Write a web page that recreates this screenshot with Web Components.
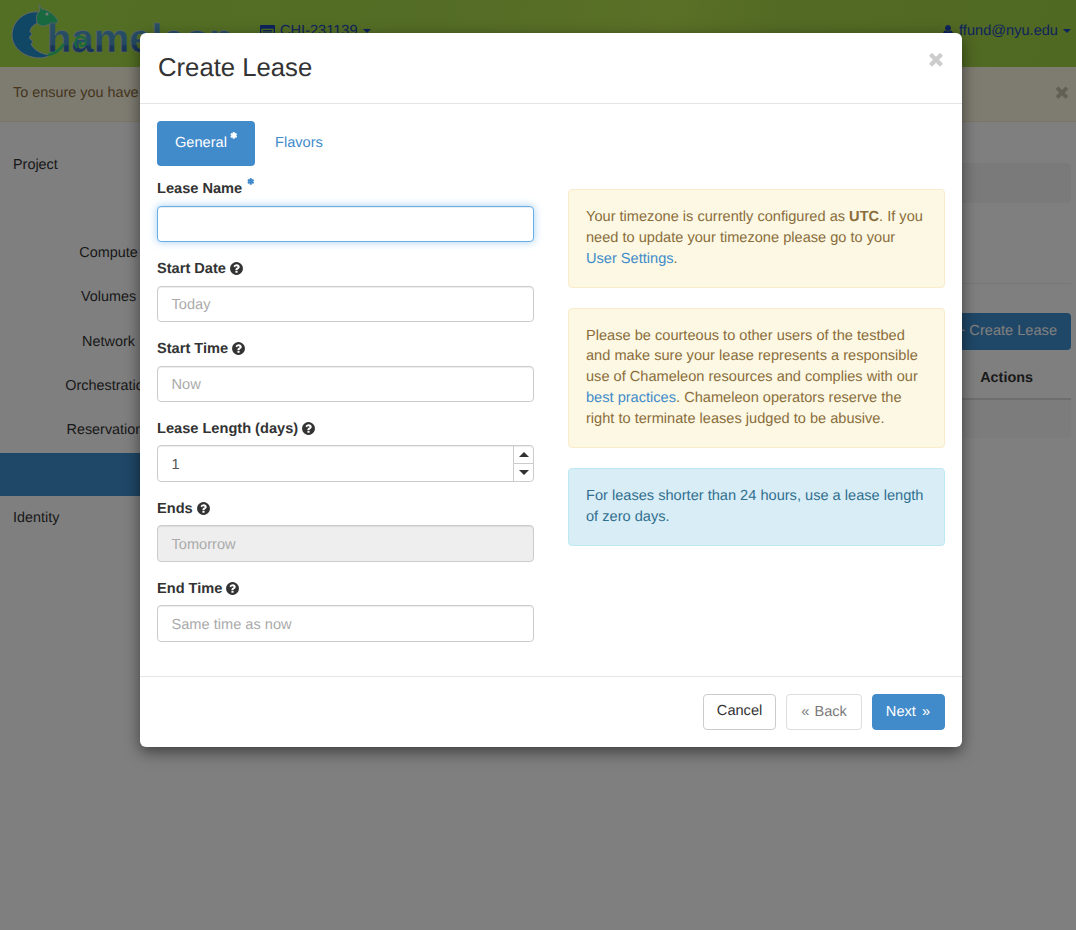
<!DOCTYPE html>
<html lang="en">
<head>
<meta charset="utf-8">
<title>Create Lease</title>
<style>
  html, body { margin: 0; height: 100%; }
  body { font: 14.400px/20.570px "Liberation Sans", Arial, sans-serif; color: #333; background: #fff; overflow: hidden; text-rendering: geometricPrecision; }
</style>
</head>
<body>

<cc-backdrop-page></cc-backdrop-page>

<cc-modal heading="Create Lease">
  <cc-tabs slot="tabs"></cc-tabs>
  <div slot="left">
    <cc-field label="Lease Name" required focused></cc-field>
    <cc-field label="Start Date" help placeholder="Today"></cc-field>
    <cc-field label="Start Time" help placeholder="Now"></cc-field>
    <cc-field label="Lease Length (days)" help value="1" spinner tall></cc-field>
    <cc-field label="Ends" help placeholder="Tomorrow" disabled tall></cc-field>
    <cc-field label="End Time" help placeholder="Same time as now" tall></cc-field>
  </div>
  <div slot="right">
    <cc-alert>Your timezone is currently configured as <b>UTC</b>. If you need to update your timezone please go to your <a>User Settings</a>.</cc-alert>
    <cc-alert>Please be courteous to other users of the testbed and make sure your lease represents a responsible use of Chameleon resources and complies with our <a>best practices</a>. Chameleon operators reserve the right to terminate leases judged to be abusive.</cc-alert>
    <cc-alert kind="info">For leases shorter than 24 hours, use a lease length of zero days.</cc-alert>
  </div>
  <cc-btn slot="footer" raised>Cancel</cc-btn>
  <cc-btn slot="footer" disabled><span>«</span><span>Back</span></cc-btn>
  <cc-btn slot="footer" primary><span>Next</span><span>»</span></cc-btn>
</cc-modal>

<script>
const ICONS = {
  help: ['0 0 1792 1792', 'M1024 1376v-192q0-14-9-23t-23-9h-192q-14 0-23 9t-9 23v192q0 14 9 23t23 9h192q14 0 23-9t9-23zm256-672q0-88-55.5-163t-138.5-116-170-41q-243 0-371 213-15 24 8 42l132 100q7 6 19 6 16 0 25-12 53-68 86-92 34-24 86-24 48 0 85.5 26t37.5 59q0 38-20 61t-68 45q-63 28-115.5 86.5t-52.5 125.5v36q0 14 9 23t23 9h192q14 0 23-9t9-23q0-19 21.5-49.5t54.5-49.5q32-18 49-28.5t46-35 44.5-48 28-60.5 12.5-81zm384 192q0 209-103 385.5t-279.5 279.5-385.5 103-385.5-103-279.5-279.5-103-385.5 103-385.5 279.5-279.5 385.5-103 385.5 103 279.5 279.5 103 385.5z'],
  times: ['0 0 1792 1792', 'M1490 1322q0 40-28 68l-136 136q-28 28-68 28t-68-28l-294-294-294 294q-28 28-68 28t-68-28l-136-136q-28-28-28-68t28-68l294-294-294-294q-28-28-28-68t28-68l136-136q28-28 68-28t68 28l294 294 294-294q28-28 68-28t68 28l136 136q28 28 28 68t-28 68l-294 294 294 294q28 28 28 68z'],
  star: ['0 0 1792 1792', 'M1546 1050q46 26 59.5 77.5t-12.5 97.5l-64 110q-26 46-77.5 59.5t-97.5-12.5l-133-77v153q0 53-37.5 90.5t-90.5 37.5h-128q-53 0-90.5-37.5t-37.5-90.5v-153l-133 77q-46 26-97.5 12.5t-77.5-59.5l-64-110q-26-46-12.5-97.5t59.5-77.5l133-77-133-77q-46-26-59.5-77.5t12.5-97.5l64-110q26-46 77.5-59.5t97.5 12.5l133 77v-153q0-53 37.5-90.5t90.5-37.5h128q53 0 90.5 37.5t37.5 90.5v153l133-77q46-26 97.5-12.5t77.5 59.5l64 110q26 46 12.5 97.5t-59.5 77.5l-133 77z'],
  user: ['0 0 1792 1792', 'M1536 1399q0 109-62.5 187t-150.5 78h-854q-88 0-150.5-78t-62.5-187q0-85 8.5-160.5t31.5-152 58.5-131 94-89 134.5-34.5q131 128 313 128t313-128q76 0 134.5 34.5t94 89 58.5 131 31.5 152 8.5 160.5zm-256-887q0 159-112.5 271.5t-271.5 112.5-271.5-112.5-112.5-271.5 112.5-271.5 271.5-112.5 271.5 112.5 112.5 271.5z'],
  list: ['0 0 16 16', 'M1 1h14a1 1 0 0 1 1 1v12a1 1 0 0 1-1 1H1a1 1 0 0 1-1-1V2a1 1 0 0 1 1-1zm.5 4v8.500h13V5zM3 6.500h10V8H3zM3 9h10v1.500H3zM3 11.300h10v1.200H3z']
};

class CcIcon extends HTMLElement {
  connectedCallback() {
    const [box, d] = ICONS[this.getAttribute('name')];
    const size = this.getAttribute('size') || 14;
    this.attachShadow({ mode: 'open' }).innerHTML = `
      <style>
        :host { display: inline-flex; width: ${size}px; height: ${size}px; }
        svg { width: 100%; height: 100%; fill: currentColor; display: block; }
      </style>
      <svg viewBox="${box}"><path fill-rule="evenodd" d="${d}"/></svg>`;
  }
}

class CcNavbar extends HTMLElement {
  connectedCallback() {
    this.attachShadow({ mode: 'open' }).innerHTML = `
      <style>
        :host { display: flex; align-items: flex-start; height: 67px; box-sizing: border-box; font-size: 14.600px;
          background: linear-gradient(100deg, #a5df47 0%, #a8d94b 40%, #b5e04e 62%, #a6d548 72%, #9fd145 100%); color: #1d46b8; }
        .logo { width: 248px; height: 67px; flex: none; display: block; }
        .project { display: flex; align-items: center; gap: 5px; margin: 21px 0 0 12px; }
        .caret { width: 0; height: 0; border: 4.500px solid transparent; border-top-color: currentColor; border-bottom: 0; }
        .user { margin: 21px 5px 0 auto; display: flex; align-items: center; gap: 4px; }
        .user .caret { margin-left: 1px; }
      </style>
      <svg class="logo" viewBox="0 0 248 67">
        <defs>
          <linearGradient id="lg" x1="0" y1="0" x2="0" y2="1">
            <stop offset="0" stop-color="#55a5cc"/><stop offset=".62" stop-color="#4a94c4"/><stop offset=".66" stop-color="#3570b4"/><stop offset="1" stop-color="#2a5aa0"/>
          </linearGradient>
        </defs>
        <path d="M40 12 C24 10 12 22 12 35 C12 49 26 58 40 58 C44 58 47 57 50 55 C41 54 34 50 31 44 C33 43 33 40 30 39 C29 37 30 35 32 35 C32 33 30 32 30 31 C31 27 34 24 39 23 Z" fill="#1f8fc8" stroke="#c9d2d8" stroke-width="1"/>
        <path d="M39 4 L42 9 C49 10 55 15 58 21 L56 24 C52 24 50 24 47 25 C44 27 40 26 37 23 C36 18 36 13 40 11 Z" fill="#30d080" stroke="#c9d2d8" stroke-width=".8"/>
        <circle cx="47" cy="14" r="1.600" fill="#e4f5ea"/>
        <text x="47" y="52" font-family="Liberation Sans" font-size="40" font-weight="bold" fill="url(#lg)" stroke="#c9d2d8" stroke-width=".4">hameleon</text>
        <path d="M48 55 C54 54 60 50 64 44" fill="none" stroke="#30d080" stroke-width="2.500"/>
        <path d="M77 48 C73 42 77 36 82 37 C87 38 87 45 83 46 C80 47 79 43 82 42" fill="none" stroke="#30d080" stroke-width="2"/>
      </svg>
      <div class="project"><cc-icon name="list" size="15"></cc-icon>CHI-231139<span class="caret"></span></div>
      <div class="user"><cc-icon name="user" size="14"></cc-icon>ffund@nyu.edu<span class="caret"></span></div>`;
  }
}

class CcBackdropPage extends HTMLElement {
  connectedCallback() {
    this.attachShadow({ mode: 'open' }).innerHTML = `
      <style>
        :host { display: block; height: 930px; background: #fff; }
        .notice { height: 55px; box-sizing: border-box; background: #fcf8e3; border-bottom: 1px solid #faebcc; color: #8a6d3b;
          display: flex; align-items: center; justify-content: space-between; padding: 0 5px 1px 13px; }
        .notice cc-icon { color: #c5c1a9; margin-bottom: 4px; }
        .body { display: flex; }
        nav { width: 217px; flex: none; padding-top: 21px; }
        nav div { height: 44.250px; line-height: 46.250px; text-align: center; }
        nav .top { text-align: left; padding-left: 13px; height: 42px; line-height: 44px; }
        nav .gap { height: 45px; }
        nav .active { background: #3e8ecf; height: 43px; margin-top: 2px; }
        main { flex: 1; padding: 41px 5px 0 20px; display: flex; flex-direction: column; }
        .well { height: 40px; background: #f5f5f5; border-radius: 4px; flex: none; }
        hr { border: 0; border-top: 1px solid #eee; margin: 80px 0 29px; }
        .bar { display: flex; justify-content: flex-end; }
        .create { height: 37px; width: 300px; box-sizing: border-box; background: #3e8ecf; border-radius: 4px; color: #fff; text-align: right;
          padding: 8px 14px; font-size: 14.600px; }
        .head { height: 50px; border-bottom: 2px solid #ddd; box-sizing: border-box; font-weight: bold; color: #333; text-align: right; padding: 18px 38px 0 0; }
        .row { height: 38px; background: #f9f9f9; }
      </style>
      <cc-navbar></cc-navbar>
      <div class="notice"><span>To ensure you have</span><cc-icon name="times" size="18"></cc-icon></div>
      <div class="body">
        <nav>
          <div class="top">Project</div>
          <div class="gap"></div>
          <div>Compute</div>
          <div>Volumes</div>
          <div>Network</div>
          <div>Orchestration</div>
          <div>Reservations</div>
          <div class="active"></div>
          <div class="top">Identity</div>
        </nav>
        <main>
          <div class="well"></div>
          <hr>
          <div class="bar"><div class="create">+ Create Lease</div></div>
          <div class="head">Actions</div>
          <div class="row"></div>
        </main>
      </div>`;
  }
}

class CcModal extends HTMLElement {
  connectedCallback() {
    this.attachShadow({ mode: 'open' }).innerHTML = `
      <style>
        :host { display: block; position: absolute; inset: 0; background: rgba(0,0,0,.5); font-size: 14.600px; line-height: 20.800px; }
        .dialog { position: absolute; left: 140px; top: 33px; width: 822px; background: #fff; border-radius: 6px;
          box-shadow: 0 5px 15px rgba(0,0,0,.5); }
        header { height: 71px; box-sizing: border-box; border-bottom: 1px solid #e5e5e5; display: flex; justify-content: space-between;
          padding: 20px 16px 0 18px; }
        h4 { margin: 0; font-size: 25.700px; line-height: 30px; font-weight: 500; color: #333; }
        .x { color: #ccc; margin-top: -4px; }
        .body { padding: 17px 17px 18px; }
        .cols { display: grid; grid-template-columns: 377px 377px; column-gap: 34px; margin-top: 12px; }
        .right { padding-top: 11px; }
        footer { border-top: 1px solid #e5e5e5; height: 71px; box-sizing: border-box; padding: 17px; display: flex; justify-content: flex-end; gap: 10px; }
      </style>
      <div class="dialog" role="dialog">
        <header><h4>${this.getAttribute('heading')}</h4><cc-icon class="x" name="times" size="20"></cc-icon></header>
        <div class="body">
          <slot name="tabs"></slot>
          <div class="cols">
            <div class="left"><slot name="left"></slot></div>
            <div class="right"><slot name="right"></slot></div>
          </div>
        </div>
        <footer><slot name="footer"></slot></footer>
      </div>`;
  }
}

class CcTabs extends HTMLElement {
  connectedCallback() {
    this.attachShadow({ mode: 'open' }).innerHTML = `
      <style>
        :host { display: flex; gap: 2px; }
        a { display: block; height: 45px; box-sizing: border-box; padding: 12px 18px; border-radius: 4px; color: #428bca; line-height: 20px; }
        a.on { background: #428bca; color: #fff; width: 98px; white-space: nowrap; }
        cc-icon { position: relative; top: -8px; left: -3px; vertical-align: top; margin-top: 5px; }
      </style>
      <a class="on">General <cc-icon name="star" size="10"></cc-icon></a>
      <a>Flavors</a>`;
  }
}

class CcField extends HTMLElement {
  connectedCallback() {
    const a = n => this.getAttribute(n);
    const has = n => this.hasAttribute(n);
    this.attachShadow({ mode: 'open' }).innerHTML = `
      <style>
        :host { display: block; height: 80px; }
        label { display: flex; align-items: center; gap: 3px; height: 20px; font-weight: bold; color: #333; margin-bottom: 8px; }
        label span { padding-top: 2px; }
        .req { color: #428bca; align-self: flex-start; margin: -2px 0 0 0; }
        .box { height: 36px; box-sizing: border-box; border: 1px solid #ccc; border-radius: 4px; background: #fff;
          display: flex; box-shadow: inset 0 1px 1px rgba(0,0,0,.075); overflow: hidden; }
        .box.tall { height: 37px; margin-top: -1px; }
        .box.focus { border-color: #66afe9; box-shadow: inset 0 1px 1px rgba(0,0,0,.075), 0 0 8px rgba(102,175,233,.6); }
        .box.off { background: #eee; }
        .val { flex: 1; padding: 8px 13.500px 6px; color: #555; line-height: 20px; }
        .tall .val { padding-top: 9px; }
        .ph { color: #aaa; }
        .spin { width: 19px; border-left: 1px solid #ccc; display: flex; flex-direction: column; }
        .spin i { flex: 1; display: flex; align-items: center; justify-content: center; }
        .spin i + i { border-top: 1px solid #ccc; }
        .up { border: 5px solid transparent; border-top: 0; border-bottom-color: #333; }
        .dn { border: 5px solid transparent; border-bottom: 0; border-top-color: #333; }
      </style>
      <label><span>${a('label')}</span>
        ${has('help') ? '<cc-icon name="help" size="15"></cc-icon>' : ''}
        ${has('required') ? '<cc-icon class="req" name="star" size="10"></cc-icon>' : ''}
      </label>
      <div class="box ${has('focused') ? 'focus' : ''} ${has('disabled') ? 'off' : ''} ${has('tall') ? 'tall' : ''}">
        <div class="val ${a('value') ? '' : 'ph'}">${a('value') || a('placeholder') || ''}</div>
        ${has('spinner') ? '<div class="spin"><i><span class="up"></span></i><i><span class="dn"></span></i></div>' : ''}
      </div>`;
  }
}

class CcAlert extends HTMLElement {
  connectedCallback() {
    const info = this.getAttribute('kind') === 'info';
    this.attachShadow({ mode: 'open' }).innerHTML = `
      <style>
        :host { display: block; margin-bottom: 20px; padding: 17px 17px 17.300px; border-radius: 4px; border: 1px solid;
          background: ${info ? '#d9edf7' : '#fcf8e3'}; border-color: ${info ? '#bce8f1' : '#faebcc'}; color: ${info ? '#31708f' : '#8a6d3b'}; }
        ::slotted(a) { color: #428bca; }
      </style>
      <slot></slot>`;
  }
}

class CcBtn extends HTMLElement {
  connectedCallback() {
    this.attachShadow({ mode: 'open' }).innerHTML = `
      <style>
        :host { display: flex; align-items: center; gap: 5px; height: 36px; box-sizing: border-box; padding: 0 14px; border-radius: 4px; border: 1px solid #ccc; background: #fff; color: #333; }
        :host([raised]) { padding: 0 13px 2px; }
        :host([disabled]) { opacity: .65; }
        :host([primary]) { background: #428bca; border-color: #428bca; color: #fff; gap: 6px; padding: 0 14px 0 13px; }
      </style>
      <slot></slot>`;
  }
}

customElements.define('cc-icon', CcIcon);
customElements.define('cc-navbar', CcNavbar);
customElements.define('cc-backdrop-page', CcBackdropPage);
customElements.define('cc-modal', CcModal);
customElements.define('cc-tabs', CcTabs);
customElements.define('cc-field', CcField);
customElements.define('cc-alert', CcAlert);
customElements.define('cc-btn', CcBtn);
</script>
</body>
</html>
